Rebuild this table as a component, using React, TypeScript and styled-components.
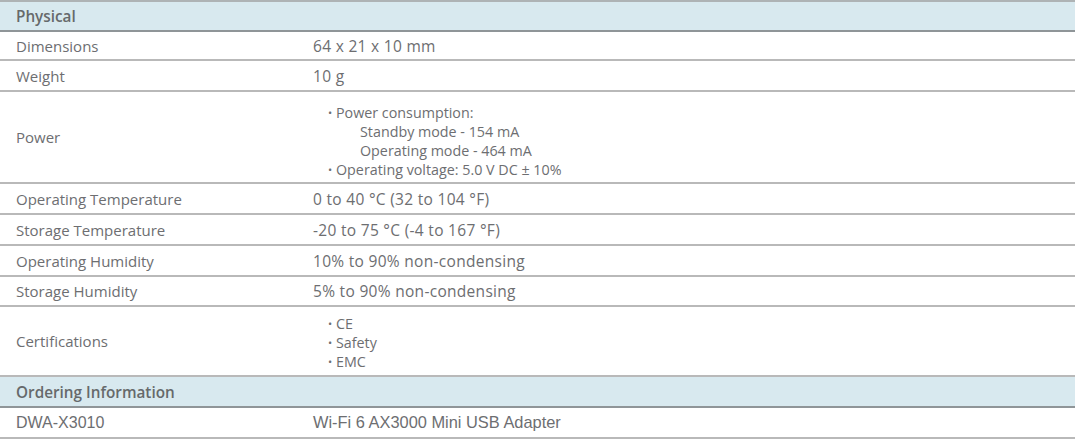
import styled, { createGlobalStyle } from 'styled-components';

const GlobalStyle = createGlobalStyle`
  body {
    margin: 0;
    background: #ffffff;
    font-family: 'Open Sans', 'Noto Sans', sans-serif;
  }
`;

const Table = styled.div`
  width: 1075px;
  border-top: 2px solid #aeb3b5;
  color: #6d6e71;
`;

const SectionHeader = styled.div<{ $h: number }>`
  height: ${(p) => p.$h}px;
  box-sizing: border-box;
  display: flex;
  align-items: center;
  padding-left: 16px;
  background: #d8e9ef;
  border-bottom: 2px solid #8f9598;
  font-size: 15.3px;
  font-weight: 600;
  color: #66696b;
`;

const Row = styled.div<{ $h: number }>`
  height: ${(p) => p.$h}px;
  box-sizing: border-box;
  display: grid;
  grid-template-columns: 313px 1fr;
  align-items: center;
  border-bottom: 2px solid #b9b9b9;
  font-size: 15px;
`;

const Label = styled.div<{ $arial?: boolean }>`
  padding-left: 16px;
  font-family: ${(p) => (p.$arial ? "'Liberation Sans', Arial, sans-serif" : 'inherit')};
  font-size: ${(p) => (p.$arial ? '16px' : '15px')};
`;

const Value = styled.div<{ $arial?: boolean }>`
  font-family: ${(p) => (p.$arial ? "'Liberation Sans', Arial, sans-serif" : 'inherit')};
  font-size: ${(p) => (p.$arial ? '16.4px' : '15.5px')};
  letter-spacing: ${(p) => (p.$arial ? '0' : '0.3px')};
`;

const List = styled.ul<{ $shift?: number }>`
  margin: ${(p) => p.$shift ?? 0}px 0 0 0;
  padding: 0 0 0 15px;
  list-style: none;
  line-height: 19px;
  font-size: 14.3px;
`;

const Item = styled.li`
  position: relative;
  padding-left: 8px;

  &::before {
    content: '•';
    position: absolute;
    left: 0;
    font-size: 11px;
  }
`;

const Sub = styled.div`
  padding-left: 24px;
`;

type Spec = { label: string; value: string; h: number };

const simple: Spec[] = [
  { label: 'Operating Temperature', value: '0 to 40 °C (32 to 104 °F)', h: 31 },
  { label: 'Storage Temperature', value: '-20 to 75 °C (-4 to 167 °F)', h: 31 },
  { label: 'Operating Humidity', value: '10% to 90% non-condensing', h: 31 },
  { label: 'Storage Humidity', value: '5% to 90% non-condensing', h: 30 },
];

export default function App() {
  return (
    <>
      <GlobalStyle />
      <Table>
        <SectionHeader $h={30}>Physical</SectionHeader>
        <Row $h={29}>
          <Label>Dimensions</Label>
          <Value>64 x 21 x 10 mm</Value>
        </Row>
        <Row $h={31}>
          <Label>Weight</Label>
          <Value>10 g</Value>
        </Row>
        <Row $h={92}>
          <Label>Power</Label>
          <List $shift={8}>
            <Item>
              Power consumption:
              <Sub>Standby mode - 154 mA</Sub>
              <Sub>Operating mode - 464 mA</Sub>
            </Item>
            <Item>Operating voltage: 5.0 V DC ± 10%</Item>
          </List>
        </Row>
        {simple.map((s) => (
          <Row key={s.label} $h={s.h}>
            <Label>{s.label}</Label>
            <Value>{s.value}</Value>
          </Row>
        ))}
        <Row $h={70}>
          <Label>Certifications</Label>
          <List $shift={2}>
            <Item>CE</Item>
            <Item>Safety</Item>
            <Item>EMC</Item>
          </List>
        </Row>
        <SectionHeader $h={31}>Ordering Information</SectionHeader>
        <Row $h={31}>
          <Label $arial>DWA-X3010</Label>
          <Value $arial>Wi-Fi 6 AX3000 Mini USB Adapter</Value>
        </Row>
      </Table>
    </>
  );
}
